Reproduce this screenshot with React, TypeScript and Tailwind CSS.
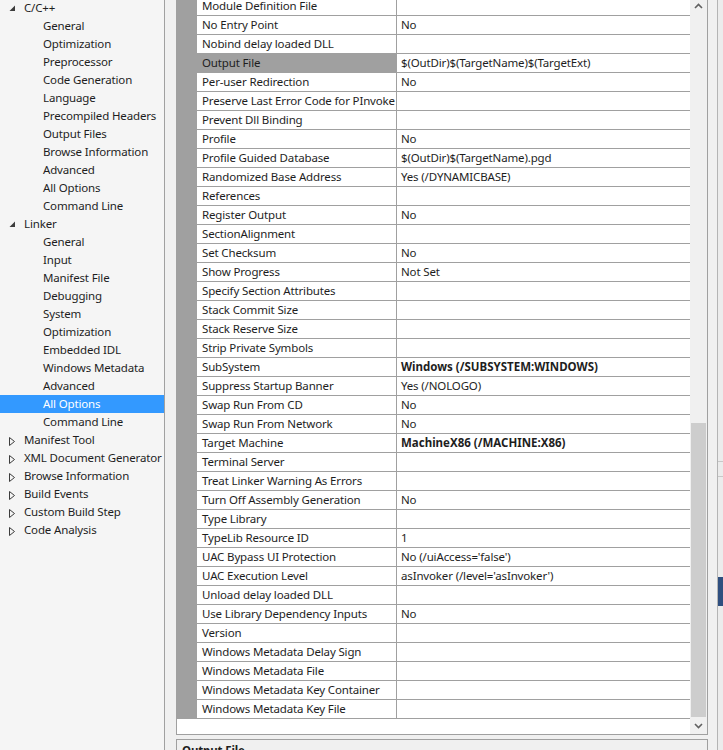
import React from "react";

type TreeItem = { label: string; level: 1 | 2; exp?: "open" | "closed"; selected?: boolean };

const tree: TreeItem[] = [
  { label: "C/C++", level: 1, exp: "open" },
  { label: "General", level: 2 },
  { label: "Optimization", level: 2 },
  { label: "Preprocessor", level: 2 },
  { label: "Code Generation", level: 2 },
  { label: "Language", level: 2 },
  { label: "Precompiled Headers", level: 2 },
  { label: "Output Files", level: 2 },
  { label: "Browse Information", level: 2 },
  { label: "Advanced", level: 2 },
  { label: "All Options", level: 2 },
  { label: "Command Line", level: 2 },
  { label: "Linker", level: 1, exp: "open" },
  { label: "General", level: 2 },
  { label: "Input", level: 2 },
  { label: "Manifest File", level: 2 },
  { label: "Debugging", level: 2 },
  { label: "System", level: 2 },
  { label: "Optimization", level: 2 },
  { label: "Embedded IDL", level: 2 },
  { label: "Windows Metadata", level: 2 },
  { label: "Advanced", level: 2 },
  { label: "All Options", level: 2, selected: true },
  { label: "Command Line", level: 2 },
  { label: "Manifest Tool", level: 1, exp: "closed" },
  { label: "XML Document Generator", level: 1, exp: "closed" },
  { label: "Browse Information", level: 1, exp: "closed" },
  { label: "Build Events", level: 1, exp: "closed" },
  { label: "Custom Build Step", level: 1, exp: "closed" },
  { label: "Code Analysis", level: 1, exp: "closed" },
];

type Row = { name: string; value?: string; bold?: boolean; selected?: boolean };

const rows: Row[] = [
  { name: "Module Definition File" },
  { name: "No Entry Point", value: "No" },
  { name: "Nobind delay loaded DLL" },
  { name: "Output File", value: "$(OutDir)$(TargetName)$(TargetExt)", selected: true },
  { name: "Per-user Redirection", value: "No" },
  { name: "Preserve Last Error Code for PInvoke" },
  { name: "Prevent Dll Binding" },
  { name: "Profile", value: "No" },
  { name: "Profile Guided Database", value: "$(OutDir)$(TargetName).pgd" },
  { name: "Randomized Base Address", value: "Yes (/DYNAMICBASE)" },
  { name: "References" },
  { name: "Register Output", value: "No" },
  { name: "SectionAlignment" },
  { name: "Set Checksum", value: "No" },
  { name: "Show Progress", value: "Not Set" },
  { name: "Specify Section Attributes" },
  { name: "Stack Commit Size" },
  { name: "Stack Reserve Size" },
  { name: "Strip Private Symbols" },
  { name: "SubSystem", value: "Windows (/SUBSYSTEM:WINDOWS)", bold: true },
  { name: "Suppress Startup Banner", value: "Yes (/NOLOGO)" },
  { name: "Swap Run From CD", value: "No" },
  { name: "Swap Run From Network", value: "No" },
  { name: "Target Machine", value: "MachineX86 (/MACHINE:X86)", bold: true },
  { name: "Terminal Server" },
  { name: "Treat Linker Warning As Errors" },
  { name: "Turn Off Assembly Generation", value: "No" },
  { name: "Type Library" },
  { name: "TypeLib Resource ID", value: "1" },
  { name: "UAC Bypass UI Protection", value: "No (/uiAccess='false')" },
  { name: "UAC Execution Level", value: "asInvoker (/level='asInvoker')" },
  { name: "Unload delay loaded DLL" },
  { name: "Use Library Dependency Inputs", value: "No" },
  { name: "Version" },
  { name: "Windows Metadata Delay Sign" },
  { name: "Windows Metadata File" },
  { name: "Windows Metadata Key Container" },
  { name: "Windows Metadata Key File" },
];

function Expander({ kind }: { kind: "open" | "closed" }) {
  return (
    <svg width="8" height="18" viewBox="0 0 8 18" className="shrink-0">
      {kind === "open" ? (
        <polygon points="7,6.5 7,12 1.5,12" fill="#3c3c3c" />
      ) : (
        <polygon points="1.5,6.5 6.5,10.5 1.5,14.5" fill="none" stroke="#3c3c3c" strokeWidth="1" />
      )}
    </svg>
  );
}

function TreeRow({ item }: { item: TreeItem }) {
  const base = "flex h-[18px] items-center whitespace-nowrap";
  const sel = item.selected ? "bg-[#3399ff] text-white" : "text-[#1e1e1e]";
  if (item.level === 1) {
    return (
      <div className={`${base} ${sel} pl-[8px]`}>
        <Expander kind={item.exp ?? "closed"} />
        <span className="ml-[8px]">{item.label}</span>
      </div>
    );
  }
  return (
    <div className={`${base} ${sel} pl-[43px]`}>
      <span>{item.label}</span>
    </div>
  );
}

function GridRow({ row }: { row: Row }) {
  return (
    <div className="flex h-[19px] border-b border-[#a0a0a0]">
      <div className="w-[20px] shrink-0 bg-[#a0a0a0]" />
      <div
        className={`flex w-[200px] shrink-0 items-center overflow-hidden whitespace-nowrap border-r border-[#a0a0a0] pl-[5px] ${
          row.selected ? "bg-[#a0a0a0]" : "bg-white"
        }`}
      >
        {row.name}
      </div>
      <div
        className={`flex flex-1 items-center overflow-hidden whitespace-nowrap bg-white pl-[4px] ${
          row.bold ? "font-bold tracking-[0px]" : ""
        }`}
      >
        {row.value ?? ""}
      </div>
    </div>
  );
}

function Chevron({ dir }: { dir: "up" | "down" }) {
  return (
    <svg width="9" height="6" viewBox="0 0 9 6">
      {dir === "up" ? (
        <polyline points="1,5 4.5,1.5 8,5" fill="none" stroke="#606060" strokeWidth="1.6" />
      ) : (
        <polyline points="1,1 4.5,4.5 8,1" fill="none" stroke="#606060" strokeWidth="1.6" />
      )}
    </svg>
  );
}

export default function App() {
  return (
    <div className="flex h-[750px] w-[723px] overflow-hidden bg-[#f0f0f0] font-[family-name:'Noto_Sans',sans-serif] text-[11.5px] leading-[18px] tracking-[-0.15px] text-[#1e1e1e]">
      {/* Left tree */}
      <div className="w-[165px] shrink-0 border-r border-[#a0a0a0] bg-[#f5f5f5]">
        <div className="-mt-[1px]">
          {tree.map((t, i) => (
            <TreeRow key={i} item={t} />
          ))}
        </div>
      </div>

      {/* Right side */}
      <div className="flex shrink-0 flex-col pl-[11px]">
        <div className="-mt-[4px] flex h-[739px] w-[532px] shrink-0 border border-[#a0a0a0] bg-white">
          <div className="flex-1 overflow-hidden">
            {rows.map((r, i) => (
              <GridRow key={i} row={r} />
            ))}
          </div>
          <div className="flex w-[17px] shrink-0 flex-col bg-[#f0f0f0]">
            <div className="flex h-[17px] shrink-0 items-center justify-center pt-[1px]">
              <Chevron dir="up" />
            </div>
            <div className="h-[409px] shrink-0" />
            <div className="ml-[1px] w-[15px] flex-1 bg-[#cdcdcd]" />
            <div className="flex h-[17px] shrink-0 items-center justify-center">
              <Chevron dir="down" />
            </div>
          </div>
        </div>
        <div className="mt-[4px] h-[40px] w-[532px] shrink-0 border border-[#a0a0a0] bg-[#f0f0f0] pl-[5px] pt-[2px] font-bold">
          Output File
        </div>
      </div>

      {/* Far right strip */}
      <div className="flex flex-1">
        <div className="w-[9px] shrink-0" />
        <div className="w-[1px] shrink-0 bg-[#b4b4b4]" />
        <div className="flex flex-1 flex-col bg-[#ececec]">
          <div className="mt-[461px] h-[1px] shrink-0 bg-[#c8c8c8]" />
          <div className="mt-[14px] h-[1px] shrink-0 bg-[#c8c8c8]" />
          <div className="mt-[100px] h-[29px] shrink-0 bg-[#2f4f7f]" />
        </div>
      </div>
    </div>
  );
}
